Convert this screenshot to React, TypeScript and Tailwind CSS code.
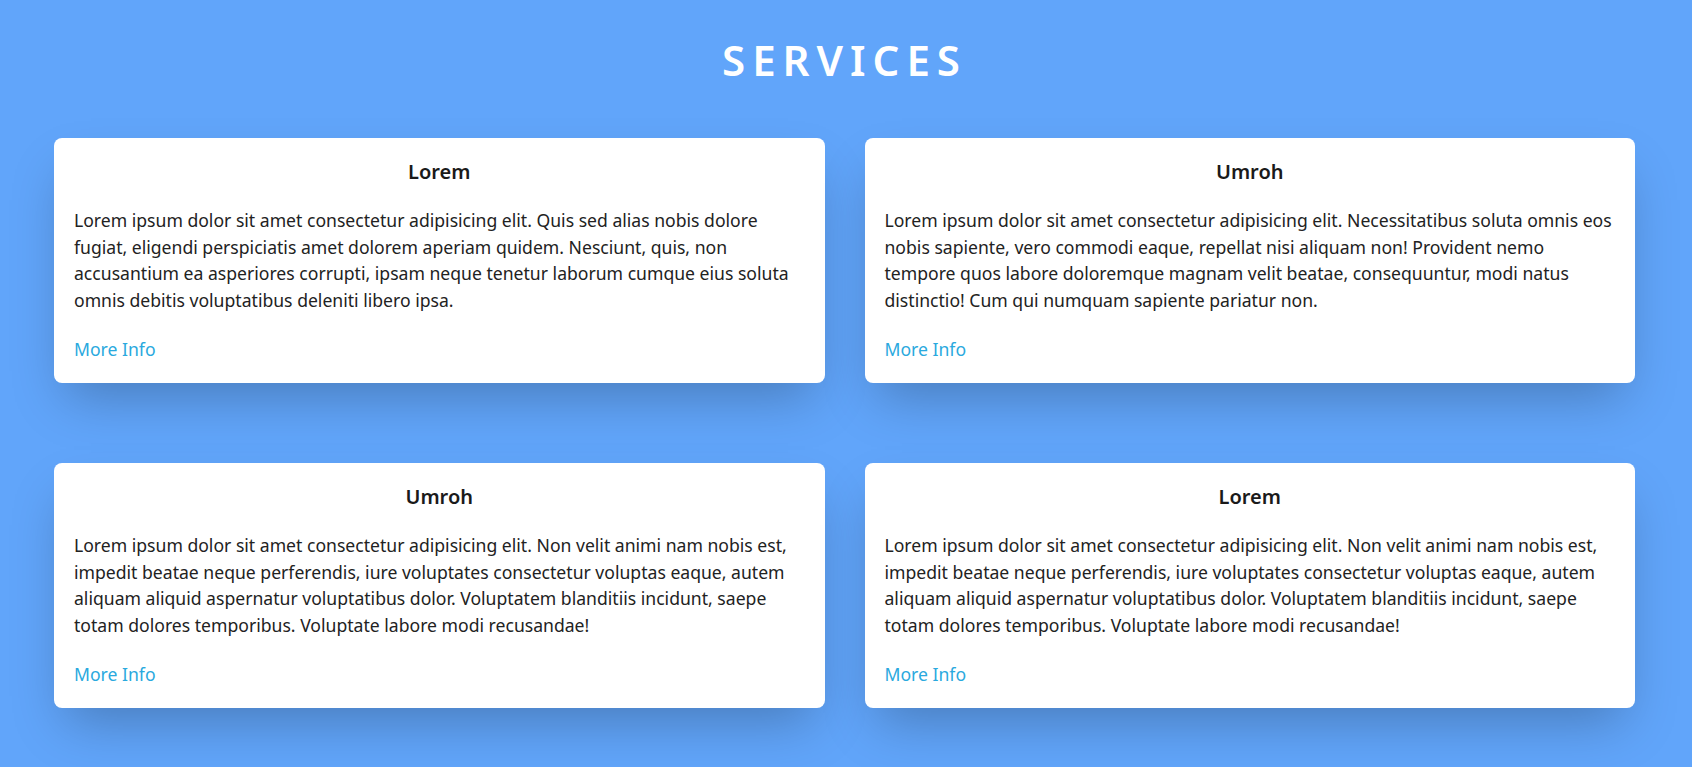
const services = [
  {
    title: "Lorem",
    body: "Lorem ipsum dolor sit amet consectetur adipisicing elit. Quis sed alias nobis dolore fugiat, eligendi perspiciatis amet dolorem aperiam quidem. Nesciunt, quis, non accusantium ea asperiores corrupti, ipsam neque tenetur laborum cumque eius soluta omnis debitis voluptatibus deleniti libero ipsa.",
  },
  {
    title: "Umroh",
    body: "Lorem ipsum dolor sit amet consectetur adipisicing elit. Necessitatibus soluta omnis eos nobis sapiente, vero commodi eaque, repellat nisi aliquam non! Provident nemo tempore quos labore doloremque magnam velit beatae, consequuntur, modi natus distinctio! Cum qui numquam sapiente pariatur non.",
  },
  {
    title: "Umroh",
    body: "Lorem ipsum dolor sit amet consectetur adipisicing elit. Non velit animi nam nobis est, impedit beatae neque perferendis, iure voluptates consectetur voluptas eaque, autem aliquam aliquid aspernatur voluptatibus dolor. Voluptatem blanditiis incidunt, saepe totam dolores temporibus. Voluptate labore modi recusandae!",
  },
  {
    title: "Lorem",
    body: "Lorem ipsum dolor sit amet consectetur adipisicing elit. Non velit animi nam nobis est, impedit beatae neque perferendis, iure voluptates consectetur voluptas eaque, autem aliquam aliquid aspernatur voluptatibus dolor. Voluptatem blanditiis incidunt, saepe totam dolores temporibus. Voluptate labore modi recusandae!",
  },
];

function ServiceCard({ title, body }: { title: string; body: string }) {
  return (
    <div className="bg-white rounded-lg px-5 pt-5 pb-[21px] shadow-2xl">
      <h3 className="text-center text-xl leading-7 font-semibold text-[#1a1a1a]">
        {title}
      </h3>
      <p className="mt-[21px] text-[1.1rem] leading-[1.5] text-[#222]">{body}</p>
      <a href="#" className="mt-[23px] block text-[1.1rem] leading-[1.5] text-[#2aa9de]">
        More Info
      </a>
    </div>
  );
}

export default function App() {
  return (
    <section
      className="min-h-screen bg-[#61a5fa] pt-[35px] pb-[59px] pl-[54px] pr-[57px]"
      style={{ fontFamily: '"Noto Sans", sans-serif' }}
    >
      <h2 className="text-center text-[42px] leading-[1.2] font-semibold tracking-[7px] text-white">
        SERVICES
      </h2>
      <div className="mt-[53px] grid grid-cols-2 gap-x-10 gap-y-20">
        {services.map((s, i) => (
          <ServiceCard key={i} title={s.title} body={s.body} />
        ))}
      </div>
    </section>
  );
}
